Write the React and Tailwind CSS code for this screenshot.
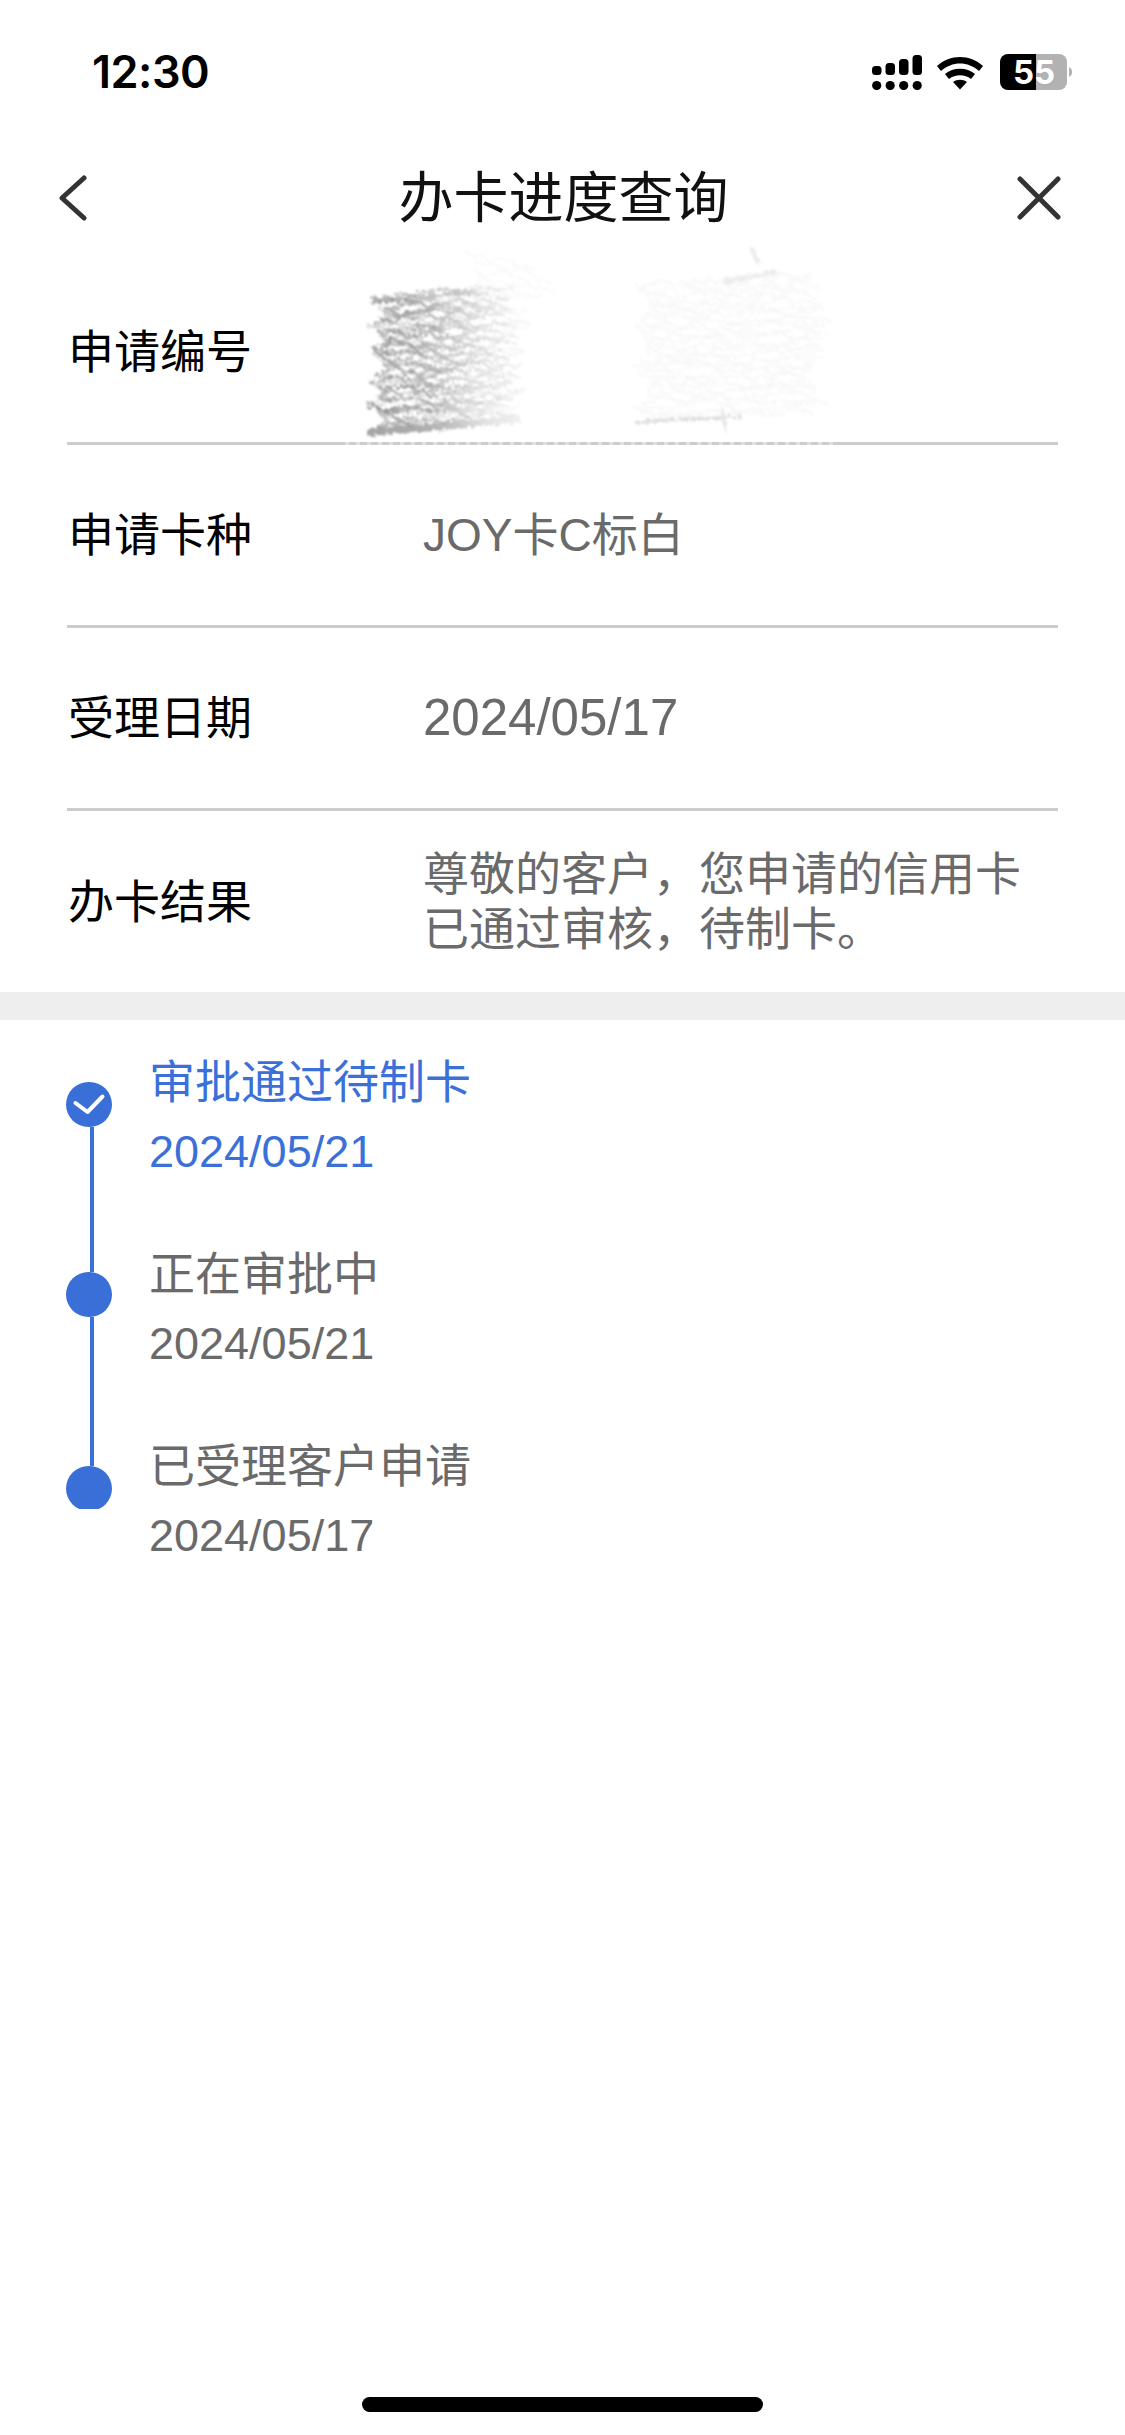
import React from 'react';

const sans = "font-['Liberation_Sans','Noto_Sans_CJK_SC',sans-serif]";

// --- deterministic pencil scribble, rising left to right ---
const scribble = (x0, x1, y0, y1, rows, seed, slope) => {
  let s = seed;
  const rnd = () => {
    s = (s * 9301 + 49297) % 233280;
    return s / 233280;
  };
  const lines = [];
  for (let r = 0; r < rows; r++) {
    const y = y0 + ((y1 - y0) * r) / rows;
    const start = x0 + 14 * Math.abs(Math.sin(r * 0.45)) + rnd() * 6;
    const end = x1 - rnd() * 26;
    let d = `M${start.toFixed(1)} ${y.toFixed(1)}`;
    for (let x = start; x < end; x += 5 + rnd() * 5) {
      d += ` L${x.toFixed(1)} ${(y - 4 + rnd() * 8 - (x - x0) * slope).toFixed(1)}`;
    }
    lines.push(d);
  }
  return lines;
};

const darkLines = scribble(368, 530, 300, 431, 34, 17, 0.1);
const lightLines = scribble(632, 835, 285, 425, 24, 91, 0.05);
const faintLines = scribble(462, 560, 254, 292, 6, 41, -0.2);

const Redaction = () => (
  <svg className="absolute left-0 top-0 pointer-events-none" width="1125" height="460" viewBox="0 0 1125 460">
    <defs>
      <linearGradient id="fade" gradientUnits="userSpaceOnUse" x1="368" y1="0" x2="540" y2="0">
        <stop offset="0" stopColor="#8c8c8c" />
        <stop offset="0.35" stopColor="#9a9a9a" />
        <stop offset="0.7" stopColor="#dcdcdc" />
        <stop offset="1" stopColor="#f8f8f8" />
      </linearGradient>
      <filter id="rough" x="-10%" y="-10%" width="120%" height="120%">
        <feTurbulence type="fractalNoise" baseFrequency="0.28" numOctaves="2" seed="4" result="noise" />
        <feDisplacementMap in="SourceGraphic" in2="noise" scale="9" result="moved" />
        <feGaussianBlur in="moved" stdDeviation="0.8" />
      </filter>
    </defs>
    <g filter="url(#rough)" fill="none" strokeWidth="2.6" strokeLinecap="round">
      {darkLines.map((d, i) => (
        <path key={i} d={d} stroke="url(#fade)" opacity={i % 5 === 2 ? 0.35 : 0.72} />
      ))}
      <path d="M370 432 C420 428 470 424 517 419" stroke="url(#fade)" strokeWidth="8" opacity="0.8" />
      <path d="M372 303 C420 296 470 292 515 287" stroke="url(#fade)" strokeWidth="3" opacity="0.6" />
      {faintLines.map((d, i) => (
        <path key={i} d={d} stroke="#fafafa" />
      ))}
      {lightLines.map((d, i) => (
        <path key={i} d={d} stroke="#f7f7f7" opacity="0.85" />
      ))}
      <path d="M636 423 C665 418 700 420 740 416" stroke="#dcdcdc" strokeWidth="3" />
      <path d="M752 250 L758 262 M725 282 L775 272" stroke="#ececec" strokeWidth="5" />
      <path d="M722 410 L726 432" stroke="#e8e8e8" />
    </g>
    <path d="M345 443.5 H840" stroke="#ffffff" strokeWidth="3" strokeDasharray="4 7" opacity="0.4" />
  </svg>
);

const StatusIcons = () => (
  <svg width="200" height="36" viewBox="0 0 200 36" className="mr-[53px]">
    {/* cellular */}
    <rect x="0" y="12" width="9.5" height="9" rx="3.5" />
    <rect x="13.5" y="9" width="9.5" height="12" rx="3.5" />
    <rect x="27" y="5" width="9.5" height="16" rx="3.5" />
    <rect x="40.5" y="1" width="9.5" height="20" rx="3.5" />
    <circle cx="4.7" cy="31.5" r="4.6" />
    <circle cx="18.2" cy="31.5" r="4.6" />
    <circle cx="31.7" cy="31.5" r="4.6" />
    <circle cx="45.2" cy="31.5" r="4.6" />
    {/* wifi */}
    <path d="M65 11 C78 -1 98 -1 111 11 L107 16 C96 6 80 6 69 16 Z" transform="translate(0 1)" />
    <path d="M73 20 C81 13 95 13 103 20 L99 25 C93 20 83 20 77 25 Z" />
    <path d="M81 28 C85 25 91 25 95 28 L88 35.5 Z" />
    {/* battery */}
    <path d="M128 8 a8 8 0 0 1 8 -8 H164 V36 H136 a8 8 0 0 1 -8 -8 Z" fill="#000" />
    <path d="M164 0 H187 a8 8 0 0 1 8 8 V28 a8 8 0 0 1 -8 8 H164 Z" fill="#b2b2b2" />
    <path d="M197 13 C199.500 14 200 16 200 18 C200 20 199.500 22 197 23 Z" fill="#b2b2b2" />
  </svg>
);

const rows = [
  { label: '申请编号', value: '', size: 'text-[46px]' },
  { label: '申请卡种', value: 'JOY卡C标白', size: 'text-[46px]' },
  { label: '受理日期', value: '2024/05/17', size: 'text-[51px]' },
];

const steps = [
  { title: '审批通过待制卡', date: '2024/05/21', color: 'text-[#3b70d8]' },
  { title: '正在审批中', date: '2024/05/21', color: 'text-[#6a6a6a]' },
  { title: '已受理客户申请', date: '2024/05/17', color: 'text-[#6a6a6a]' },
];

const App = () => {
  return (
    <div className={`relative min-h-[2435px] bg-white flex flex-col overflow-hidden ${sans}`}>
      {/* --- STATUS BAR --- */}
      <div className="h-[133px] shrink-0">
        <div className="flex items-center justify-between pl-[92px] pt-[42px] h-[102px]">
          <span className="font-['Inter',sans-serif] font-semibold text-[45px] leading-[60px] tracking-[-0.5px] text-black">12:30</span>
          <div className="relative">
            <StatusIcons />
            <span className="absolute left-[141px] top-[-3px] font-['Inter',sans-serif] font-bold text-[33px] leading-[42px] text-white">55</span>
          </div>
        </div>
      </div>

      {/* --- NAV --- */}
      <div className="h-[129px] shrink-0 flex items-center pl-[58px] pr-[64px]">
        <div className="flex-1">
          <svg width="30" height="46" viewBox="0 0 30 46" fill="none" stroke="#333333" strokeWidth="5" strokeLinecap="round" strokeLinejoin="round">
            <path d="M26 3 L4 23 L26 43" />
          </svg>
        </div>
        <span className="ml-[8px] text-[55px] leading-[70px] text-[#111111] font-normal">办卡进度查询</span>
        <div className="flex-1 flex justify-end">
          <svg width="44" height="44" viewBox="0 0 44 44" fill="none" stroke="#333333" strokeWidth="5" strokeLinecap="round">
            <path d="M3 3 L41 41 M41 3 L3 41" />
          </svg>
        </div>
      </div>

      {/* --- DETAIL ROWS --- */}
      <div className="px-[67px]">
        {rows.map((row) => (
          <div key={row.label} className="h-[183px] pl-[1px] flex items-center border-b-[3px] border-[#cccccc]">
            <span className="w-[355px] shrink-0 text-[46px] leading-[60px] text-black font-normal">{row.label}</span>
            <span className={`${row.size} leading-[60px] text-[#6a6a6a] font-normal`}>{row.value}</span>
          </div>
        ))}
        <div className="h-[181px] pl-[1px] flex items-center">
          <span className="w-[355px] shrink-0 text-[46px] leading-[60px] text-black font-normal">办卡结果</span>
          <p className="text-[46px] leading-[55px] text-[#6a6a6a] font-normal whitespace-nowrap">
            尊敬的客户，您申请的信用卡
            <br />
            已通过审核，待制卡。
          </p>
        </div>
      </div>

      <Redaction />

      <div className="h-[28px] shrink-0 bg-[#eeeeee]" />

      {/* --- TIMELINE --- */}
      <div className="flex pl-[66px]">
        <div className="w-[83px] shrink-0 flex flex-col pt-[62px]">
          <div className="w-[46px] h-[45px] rounded-full bg-[#3a6fd8] flex items-center justify-center">
            <svg width="46" height="45" viewBox="0 0 46 45" fill="none" stroke="#ffffff" strokeWidth="4" strokeLinecap="round" strokeLinejoin="round">
              <path d="M9.500 21 L21.500 30 L36.500 14.500" />
            </svg>
          </div>
          <div className="w-[3.500px] h-[145px] ml-[24px] bg-[#3a6fd8]" />
          <div className="w-[46px] h-[45px] rounded-full bg-[#3a6fd8]" />
          <div className="w-[3.500px] h-[149px] ml-[24px] bg-[#3a6fd8]" />
          <div className="w-[46px] h-[43px] overflow-hidden">
            <div className="w-[46px] h-[45px] rounded-full bg-[#3a6fd8]" />
          </div>
        </div>
        <div className="flex flex-col pt-[32px]">
          {steps.map((step) => (
            <div key={step.title} className={`h-[192px] ${step.color}`}>
              <p className="text-[46px] leading-[60px] font-normal">{step.title}</p>
              <p className="mt-[10px] text-[45px] leading-[60px]">{step.date}</p>
            </div>
          ))}
        </div>
      </div>

      {/* --- HOME INDICATOR --- */}
      <div className="mt-auto pb-[23px] flex justify-center">
        <div className="w-[401px] h-[15px] rounded-full bg-black" />
      </div>
    </div>
  );
};

export default App;
